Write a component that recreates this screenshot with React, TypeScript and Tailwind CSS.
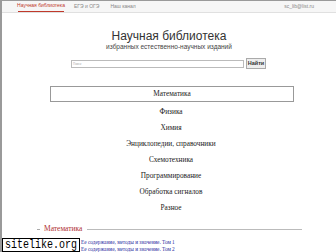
import React from 'react';

const menu = [
  'Математика',
  'Физика',
  'Химия',
  'Энциклопедии, справочники',
  'Схемотехника',
  'Программирование',
  'Обработка сигналов',
  'Разное',
];

export default function App() {
  return (
    <div className="relative w-[336px] h-[252px] overflow-hidden bg-white border-l-2 border-t border-[#9a9a9a] font-['Liberation_Sans',Arial,sans-serif]">
      {/* top bar */}
      <div className="h-[12px] bg-[#f6f6f6] border-b border-[#e0e0e0] flex items-stretch text-[5px] text-[#888] whitespace-nowrap">
        <div className="ml-[16px] w-[46px] flex items-center justify-center text-[#c0392b] border-b border-[#c0392b]">
          Научная библиотека
        </div>
        <div className="ml-[10px] flex items-center">ЕГЭ и ОГЭ</div>
        <div className="ml-[11px] flex items-center">Наш канал</div>
        <div className="ml-auto mr-[22px] flex items-center">sc_lib@list.ru</div>
      </div>

      {/* header */}
      <div className="flex flex-col items-center mt-[17px]">
        <div className="text-[12px] leading-[13px] text-[#333]">Научная библиотека</div>
        <div className="text-[6.5px] leading-[8px] text-[#444]">избранных естественно-научных изданий</div>
      </div>

      {/* search */}
      <div className="flex items-center mt-[7px] ml-[69px]">
        <div className="w-[173px] h-[8px] border border-[#bbb] bg-white text-[3px] text-[#aaa] pl-[1px] leading-[6px]">Поиск</div>
        <div className="ml-[2px] w-[20px] h-[11px] border border-[#aaa] bg-[#eee] text-[5.5px] font-bold text-[#333] flex items-center justify-center">Найти</div>
      </div>

      {/* menu */}
      <div className="flex flex-col items-center mt-[17px] font-['Liberation_Serif','Times_New_Roman',serif] text-[7.3px] text-[#222] whitespace-nowrap">
        {menu.map((m, i) => (
          <div
            key={m}
            className={
              i === 0
                ? 'w-[244px] h-[16px] ml-[6px] mb-[2px] border border-[#999] flex items-center justify-center'
                : 'h-[16px] ml-[4px] flex items-center justify-center'
            }
          >
            {m}
          </div>
        ))}
      </div>

      {/* section */}
      <div className="flex items-center mt-[8px] ml-[35px] mr-[34px] font-['Liberation_Serif','Times_New_Roman',serif]">
        <div className="w-[3px] h-px bg-[#aaa]" />
        <div className="ml-[4px] text-[7.5px] leading-[10px] text-[#b03030]">Математика</div>
        <div className="ml-[5px] flex-1 h-px bg-[#bbb]" />
      </div>

      <div className="ml-[79px] mt-[5px] font-['Liberation_Serif','Times_New_Roman',serif] text-[5.3px] leading-[6.5px] text-[#2a2aa0] whitespace-nowrap">
        <div>Ее содержание, методы и значение. Том 1</div>
        <div>Ее содержание, методы и значение. Том 2</div>
      </div>

      {/* watermark */}
      <div className="absolute left-0 bottom-0 w-[78px] h-[14px] bg-white border border-black flex items-center pl-[2px]">
        <span className="font-['Liberation_Mono','DejaVu_Sans_Mono',monospace] text-[10px] text-black leading-none scale-y-125 origin-left">
          sitelike.org
        </span>
      </div>
    </div>
  );
}
